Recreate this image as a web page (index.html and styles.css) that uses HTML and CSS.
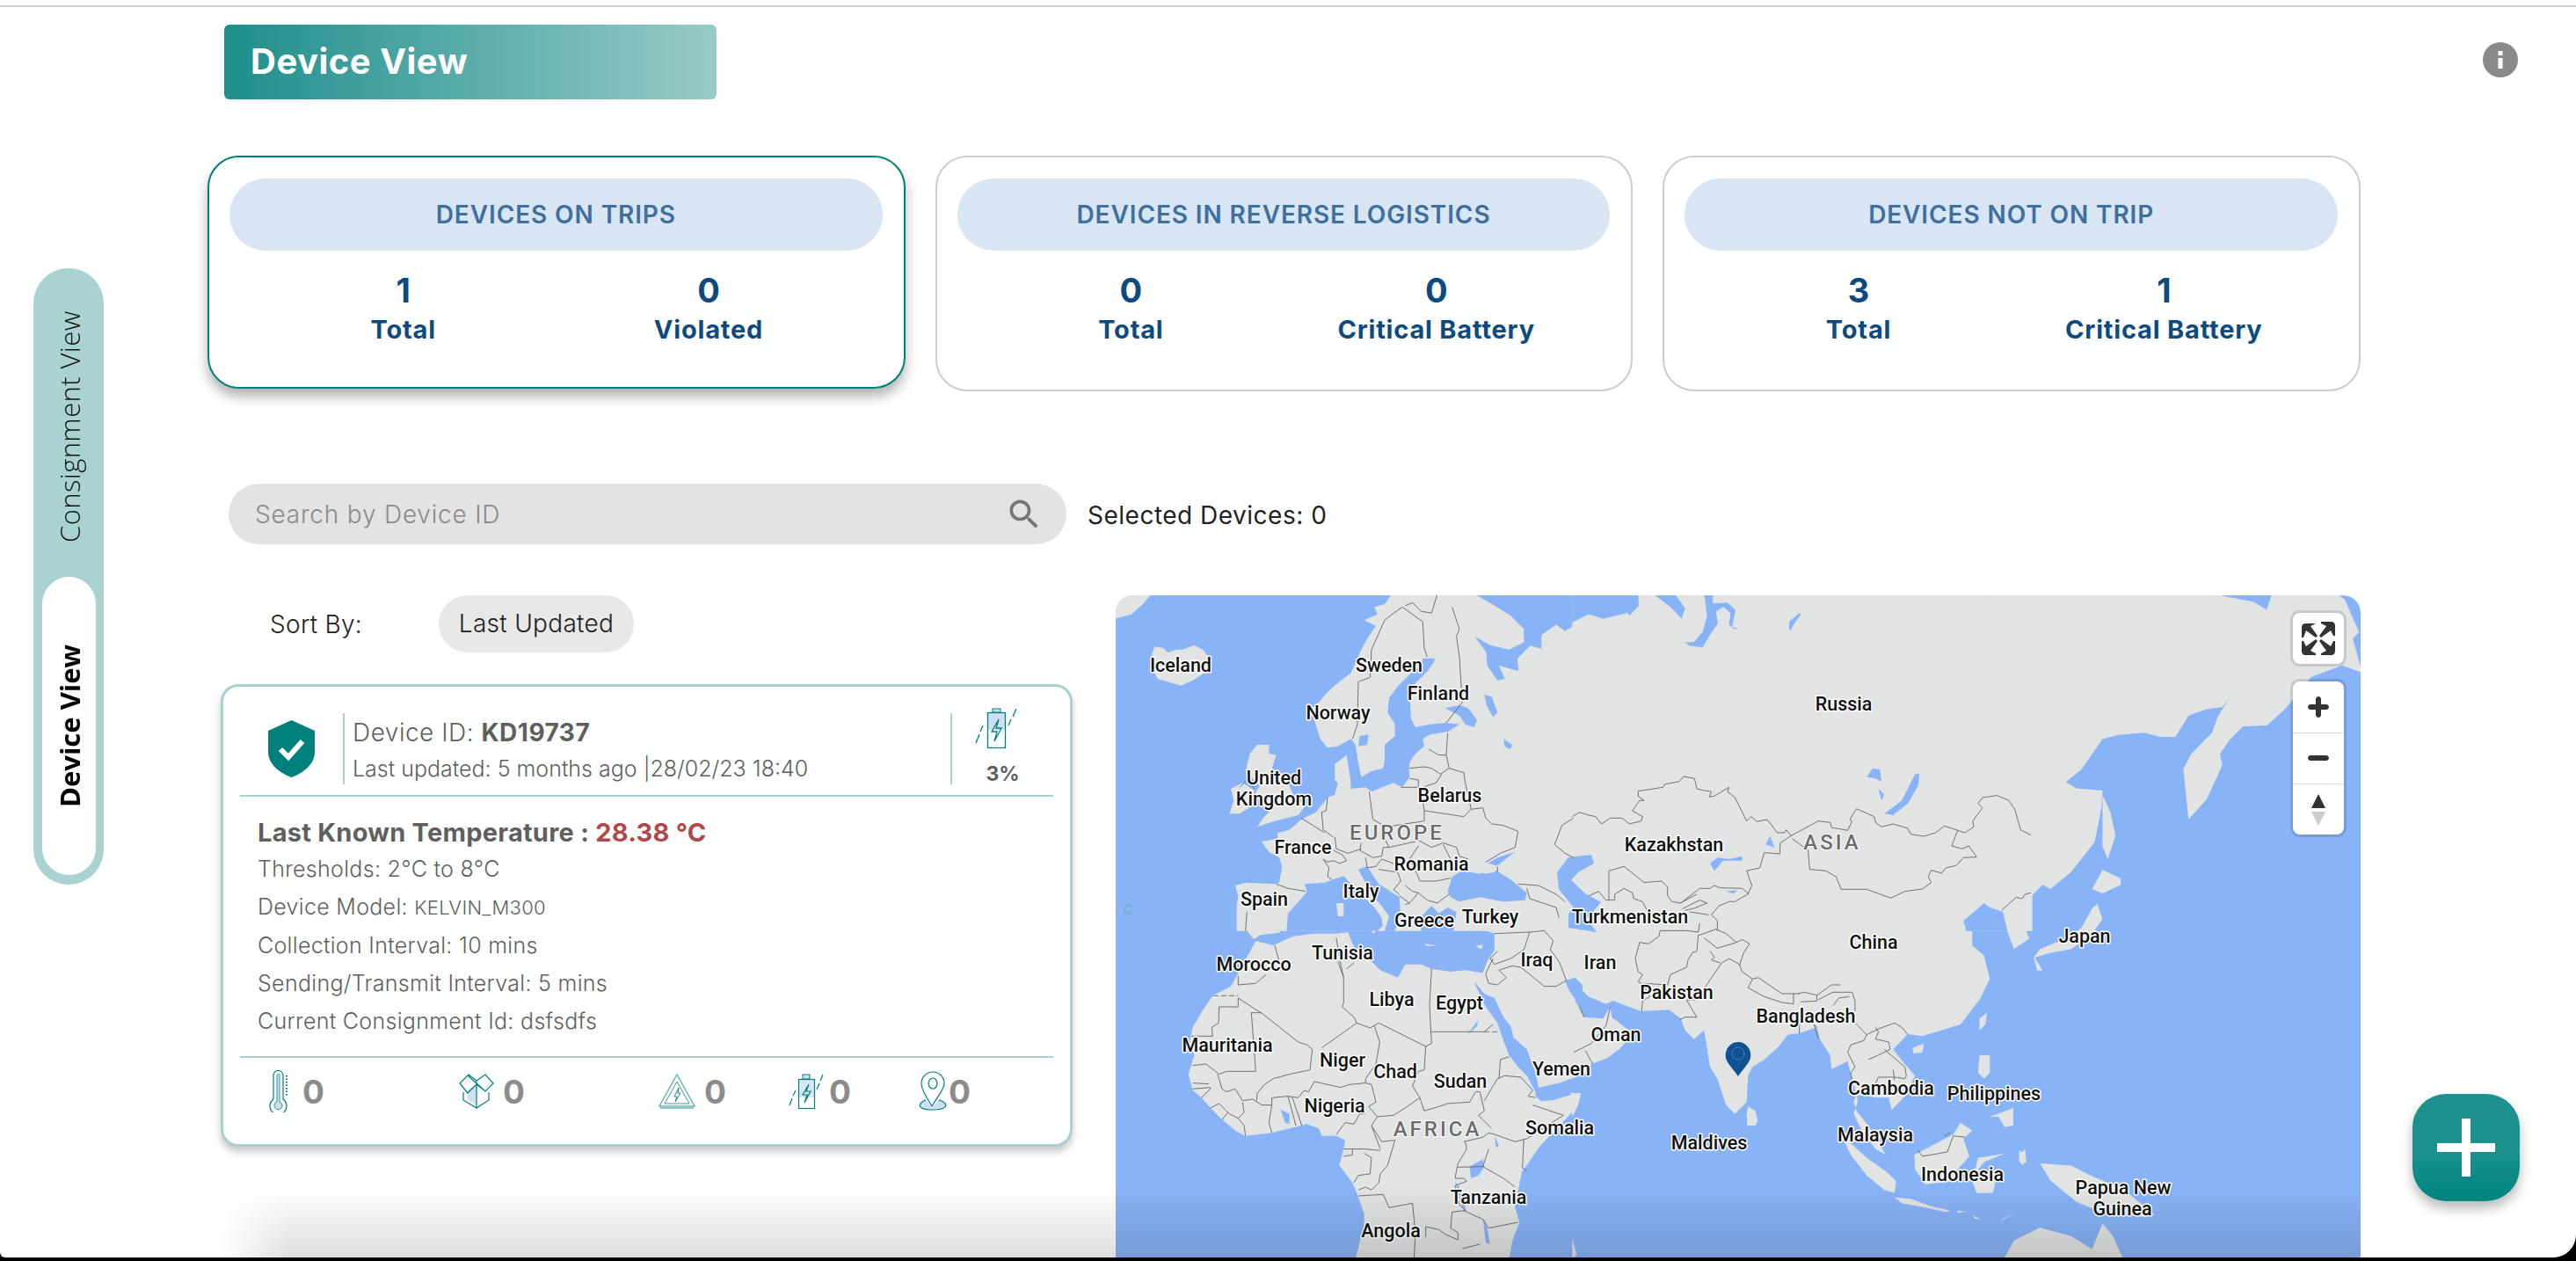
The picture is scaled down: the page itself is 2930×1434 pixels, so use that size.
FILE: index.html
```html
<!DOCTYPE html>
<html lang="en">
<head>
<meta charset="UTF-8">
<title>Device View</title>
<link rel="stylesheet" href="styles.css">
</head>
<body>
<div class="window">
  <div class="topline"></div>

  <svg class="info" width="40" height="40" viewBox="0 0 40 40">
    <circle cx="20" cy="20" r="20" fill="#8a8a8a"/>
    <rect x="17.500" y="10" width="5" height="5" fill="#fff"/>
    <rect x="17.500" y="18" width="5" height="12" fill="#fff"/>
  </svg>

  <div class="layout">
    <div class="tabs">
      <div class="tab">Consignment View</div>
      <div class="tab tab-active">Device View</div>
    </div>

    <div class="main">
      <h1 class="page-title">Device View</h1>

      <div class="summary">
        <div class="summary-card summary-selected">
          <div class="summary-title">DEVICES ON TRIPS</div>
          <div class="summary-stats">
            <div class="stat"><b>1</b><span>Total</span></div>
            <div class="stat"><b>0</b><span>Violated</span></div>
          </div>
        </div>
        <div class="summary-card">
          <div class="summary-title">DEVICES IN REVERSE LOGISTICS</div>
          <div class="summary-stats">
            <div class="stat"><b>0</b><span>Total</span></div>
            <div class="stat"><b>0</b><span>Critical Battery</span></div>
          </div>
        </div>
        <div class="summary-card">
          <div class="summary-title">DEVICES NOT ON TRIP</div>
          <div class="summary-stats">
            <div class="stat"><b>3</b><span>Total</span></div>
            <div class="stat"><b>1</b><span>Critical Battery</span></div>
          </div>
        </div>
      </div>

      <div class="search-row">
        <div class="search">
          <span>Search by Device ID</span>
          <svg width="44" height="44" viewBox="0 0 24 24"><path fill="#757575" d="M15.500 14h-.79l-.28-.27C15.410 12.590 16 11.110 16 9.500 16 5.910 13.090 3 9.500 3S3 5.910 3 9.500 5.910 16 9.500 16c1.610 0 3.090-.59 4.230-1.570l.27.280v.79l5 4.990L20.490 19l-4.990-5zm-6 0C7.010 14 5 11.990 5 9.500S7.010 5 9.500 5 14 7.010 14 9.500 11.990 14 9.500 14z"/></svg>
        </div>
        <div class="selected-count">Selected Devices: 0</div>
      </div>

      <div class="content">
        <div class="device-col">
          <div class="sort-row">
            <span class="sort-label">Sort By:</span>
            <span class="sort-pill">Last Updated</span>
          </div>

          <div class="device-card">
            <div class="device-head">
              <div class="device-status">
                <svg width="53" height="65" viewBox="0 0 53 65">
                  <path fill="#00807c" d="M26.500 0 53 12V36C53 50 40 60 26.500 65 13 60 0 50 0 36V12Z"/>
                  <path fill="none" stroke="#fff" stroke-width="6" d="M14 33 23 42 39 24"/>
                </svg>
              </div>
              <div class="device-info">
                <div class="device-id">Device ID: <b>KD19737</b></div>
                <div class="device-updated">Last updated: 5 months ago |28/02/23 18:40</div>
              </div>
              <div class="device-battery">
                <svg width="49" height="46" viewBox="0 0 49 46">
                  <rect x="14" y="5" width="21" height="20" fill="#cfdff2"/>
                  <rect x="20" y="1" width="9" height="4" fill="#cfdff2" stroke="#00807c"/>
                  <rect x="14.500" y="5.500" width="20" height="40" fill="none" stroke="#00807c" stroke-width="1.300"/>
                  <path fill="none" stroke="#00807c" stroke-width="1.300" d="M27 13 19 27H25L22 38 30 23H24ZM1 40 5 30M6 27 9 20M38 20 41 13M43 10 47 1"/>
                </svg>
                <span>3%</span>
              </div>
            </div>

            <div class="device-body">
              <div class="temp-line">Last Known Temperature : <span class="temp-value">28.38 °C</span></div>
              <div>Thresholds: 2°C to 8°C</div>
              <div>Device Model: <span class="model-code">KELVIN_M300</span></div>
              <div>Collection Interval: 10 mins</div>
              <div>Sending/Transmit Interval: 5 mins</div>
              <div>Current Consignment Id: dsfsdfs</div>
            </div>

            <div class="device-foot">
              <div class="foot-item">
                <svg width="40" height="48" viewBox="0 0 40 48">
                  <path fill="none" stroke="#00807c" stroke-width="1.200" d="M7 33V6A5.500 5.500 0 0 1 18 6V33A9.500 9.500 0 1 1 7 33Z"/>
                  <path fill="#cfdff2" stroke="#00807c" stroke-width=".8" d="M11 36V6A1.500 1.500 0 0 1 14 6V36A4.500 4.500 0 1 1 11 36Z"/>
                  <path stroke="#00807c" stroke-dasharray="1.500 2" stroke-width="2" d="M22 6V30"/>
                </svg>
                <span>0</span>
              </div>
              <div class="foot-item">
                <svg width="50" height="40" viewBox="0 0 50 40">
                  <path fill="#cfdff2" d="M20 12 10 18V30L20 36Z"/>
                  <path fill="none" stroke="#00807c" stroke-width="1.200" d="M5 21V30L20 39 34 30V21M20 39V24M1 11 11 1 20 8 30 1 39 11 30 20 20 12 10 22 1 11M20 8V24M10 2 30 20"/>
                </svg>
                <span>0</span>
              </div>
              <div class="foot-item">
                <svg width="52" height="40" viewBox="0 0 52 40">
                  <path fill="none" stroke="#6ab6b3" stroke-width="1.500" d="M21 1 1 37H41ZM2 39H40"/>
                  <path fill="none" stroke="#00807c" stroke-width=".8" d="M21 9 7 34H35Z"/>
                  <path fill="none" stroke="#00807c" stroke-width=".9" d="M23 16 18 26H21L19 32 25 22H22Z"/>
                </svg>
                <span>0</span>
              </div>
              <div class="foot-item">
                <svg width="46" height="40" viewBox="0 0 46 40">
                  <rect x="11" y="7" width="19" height="20" fill="#cfdff2" opacity=".8"/>
                  <rect x="16" y="1" width="8" height="5" fill="#cfdff2" stroke="#00807c"/>
                  <rect x="11.500" y="6.500" width="18" height="33" fill="none" stroke="#00807c" stroke-width="1.200"/>
                  <path fill="none" stroke="#00807c" stroke-width="1.200" d="M23 12 16 24H21L18 33 25 20H20ZM1 36 4 28M5 25 8 19M32 18 35 11M36 8 39 1"/>
                </svg>
                <span>0</span>
              </div>
              <div class="foot-item">
                <svg class="foot-pin" width="34" height="44" viewBox="0 0 34 44">
                  <path fill="#cfdff2" d="M7 30C-2 36 1 42 14 42 31 42 36 36 24 30L15 41Z"/>
                  <path fill="none" stroke="#00807c" stroke-width="1.200" d="M15 39C8 27 3 20 3 13A12 12 0 0 1 29 13C29 20 22 27 15 39ZM8 32C-4 37 1 43 15 43 31 43 37 37 23 32"/>
                  <ellipse cx="16" cy="13" rx="5" ry="6" fill="none" stroke="#00807c" stroke-width="1.200"/>
                </svg>
                <span>0</span>
              </div>
            </div>
          </div>
        </div>

        <div class="map">
          <svg class="map-art" width="1416" height="753" viewBox="1269 677 1416 753">
            <!-- each group keeps the coordinates of the crop it was traced in -->
            <g class="land">
              <g transform="translate(1270 677) scale(.3333)">
                <path d="M-5 80 50 65 90 30 120-5H-5Z"/>
                <path d="M115 215 130 175 160 180 175 195 205 185 225 185 265 170 295 185 310 205 320 240 300 265 260 290 220 308 175 295 140 285 125 255Z"/>
                <path d="M480 510 520 510 520 540 545 545 530 590 570 620 590 650 610 700 650 710 620 750 540 770 480 790 500 760 530 730 490 715 475 670 490 650 460 620 440 600 455 540Z"/>
                <path d="M390 660 430 640 470 665 460 720 420 745 385 745 400 700Z"/>
                <path d="M940-5H1220L1290 35 1345 70 1390 115 1390 160 1340 185 1275 170 1222 140 1262 195 1265 240 1300 290 1325 285 1305 240 1372 258 1368 215 1412 172 1450 182 1450 135 1500 100 1530 122 1565 100V1145H410V1060L415 1025 405 990 440 980 540 985 555 980 565 925 555 895 520 875 495 840 550 830 550 810 590 800 630 765 680 740 720 690 745 680 755 640 745 630 745 575 785 545 798 625 800 660 850 655 870 670 945 640 975 655 1000 620 998 600 1000 570 1020 540 1050 515 1045 490 1070 475 1130 465 1170 440 1125 435 1070 440 1020 450 1005 420 1000 340 1020 300 1060 260 1085 225 1085 215 1045 215 1040 240 1000 270 960 310 930 350 925 400 950 440 950 480 915 510 915 560 910 590 870 600 835 620 825 570 815 510 800 490 755 515 720 520 695 490 680 440 660 390 690 365 720 330 760 295 800 265 815 230 835 185 860 140 885 105 845 85 890 65 880 40 915 30Z"/>
              </g>
              <g transform="translate(1270 1050) scale(.3333)">
                <path d="M410-5 445 25 468 55 490 40 555 32 580 5 590-5Z"/>
                <path d="M835 5 870 10 905-5 880 35Z"/>
                <path d="M1030-5 1060-5 1040 25Z"/>
                <path d="M1050 70 1095 75 1060 78Z"/>
                <path d="M1225 78 1250 72 1245 88Z"/>
                <path d="M1150-5 1190 8 1250 20 1290 35 1295-5Z"/>
                <path d="M1290 35 1295-5H1565V525L1510 545 1440 560 1430 510 1400 430 1355 390 1345 350 1320 320 1290 255 1255 240 1222 200 1245 180 1265 130 1290 90Z"/>
                <path d="M475 60 535 75 600 45 670 35 750 35 790 30 805 70 830 110 870 130 900 160 960 185 985 140 1040 140 1075 155 1140 165 1190 160 1255 170 1222 205 1260 285 1300 340 1320 400 1340 450 1370 490 1400 520 1430 575 1430 590 1450 607 1490 603 1575 578 1557 642 1446 759 1383 849 1359 966 1375 1020 1350 1085 1340 1145H815L845 1030 845 990 820 920 805 885 760 825 775 770 780 740 750 725 700 725 690 700 650 685 590 700 530 715 440 725 410 710 360 670 330 640 290 595 260 570 245 515 265 450 250 400 260 355 295 295 330 245 390 215 410 180Z"/>
              </g>
              <g transform="translate(1790 677) scale(.3333)">
                <path d="M-5-5H1565V1145H-5Z"/>
              </g>
              <g transform="translate(1790 1050) scale(.3333)">
                <path d="M-5-5H1360V75L1400 110 1420 190 1385 260 1320 345 1190 385 1140 378 1090 430 1130 480 1165 520 1130 590 1085 637 1075 595 1035 595 965 585 955 610 965 640 1005 690 1065 790 1030 770 985 710 955 650 970 605 950 530 935 470 880 497 875 450 840 395 830 355 770 375 730 380 700 420 650 465 610 490 595 520 590 610 550 650 520 620 490 530 465 490 445 365 410 395 380 365 365 325 325 295 230 300 135 265 110 275 50 250 10 210-5 190Z"/>
                <path d="M-5 250 20 290 35 320 100 325 125 285 130 320 205 378 155 430 115 460 60 480 45 510-5 520Z"/>
                <path d="M-10 578 25 580 15 620-5 660Z"/>
                <path d="M-5 1075 10 1130-5 1145Z"/>
                <path d="M595 625 620 640 628 675 620 690 592 690 590 650Z"/>
                <path d="M905 700 935 740 1000 800 1070 850 1100 880 1095 920 1060 910 1000 860 945 790Z"/>
                <path d="M1095 935 1150 940 1220 965 1285 980 1270 985 1200 970 1120 955Z"/>
                <path d="M1162 790 1210 765 1295 720 1320 680 1360 707 1330 735 1350 795 1310 840 1300 880 1200 890 1165 840Z"/>
                <path d="M1380 800 1470 785 1400 815 1380 840 1440 880 1430 920 1375 920 1360 880Z"/>
                <path d="M1385 450 1420 450 1420 510 1400 530 1380 510Z"/>
                <path d="M1420 660 1500 630 1500 690 1470 695 1450 660Z"/>
                <path d="M1310 980 1340 985 1310 988ZM1360 995 1390 1010 1370 1008ZM1450 1020 1510 985 1470 1005ZM1520 790 1540 770 1545 815 1525 820Z"/>
                <path d="M1465 1145 1510 1090 1565 1120V1145Z"/>
                <path d="M1155 425 1195 410 1190 440 1160 445Z"/>
                <path d="M1385 325 1410 305 1405 345 1385 365Z"/>
              </g>
              <g transform="translate(2000 670) scale(.5931 .4873)">
                <path d="M440 10H870L900 18 950 30 975 48 985 10H1110L1125 25 1152 100 1140 115 1158 195 1120 178 1060 205 1010 280 975 318 930 320 905 350 885 385 890 410 860 490 825 537 815 420 830 385 870 335 880 300 905 250 890 275 860 280 825 295 800 345 770 345 740 335 690 340 660 350 620 420 590 450 610 465 660 470 658 510 645 590 600 660 560 700 545 690 500 745 505 775 520 815 490 840 475 790 465 755 440 740Z"/>
                <path d="M660 480 675 520 685 575 670 630 660 600Z"/>
                <path d="M660 655 695 675 695 690 660 710 640 700Z"/>
                <path d="M650 735 660 770 640 805 600 840 555 850 530 860 545 890 535 890 528 860 540 840 590 815 620 790 640 745Z"/>
                <path d="M540 1340 600 1345 640 1370 700 1400 760 1460 740 1465 660 1455 610 1430 560 1380Z"/>
                <path d="M500 1310 512 1320 508 1345 500 1335Z"/>
                <path d="M470 1565 490 1520 540 1490 600 1510 640 1540 660 1480 680 1510 700 1565Z"/>
              </g>
            </g>

            <g class="water">
              <g transform="translate(1270 677) scale(.3333)">
                <path d="M580 1145 585 1085 650 1012 642 985 710 980 738 970 775 958 800 985 840 1025 880 1065 905 1100 908 1128 890 1145Z"/>
                <path d="M825 935 855 925 895 985 965 1030 968 1075 950 1145 915 1145 930 1095 905 1060 870 1020Z"/>
                <path d="M1040 1095 1075 1060 1100 1085 1130 1065 1160 1080 1150 1145H1040Z"/>
                <path d="M1130 1010 1145 960 1180 940 1240 950 1290 935 1345 970 1400 1015 1395 1040 1320 1045 1240 1030 1170 1045 1140 1030Z"/>
                <path d="M1265 915 1300 895 1360 875 1340 890 1310 915 1290 925Z"/>
                <path d="M1120 385 1170 375 1200 385 1230 425 1220 450 1190 440 1170 410Z"/>
                <path d="M1255 340 1280 345 1300 400 1285 415 1265 380Z"/>
                <path d="M1320 490 1350 510 1345 525 1325 515Z"/>
                <path d="M830 480 860 475 855 510 825 515Z"/>
                <path d="M945 530 958 535 945 565Z"/>
              </g>
              <g transform="translate(1270 1050) scale(.3333)">
                <path d="M1530 195 1565 185 1590 210 1590 280 1570 265 1545 230Z"/>
                <path d="M560 635 590 650 590 685 575 680 565 650Z"/>
                <path d="M1205 830 1250 805 1255 830 1235 860 1210 870Z"/>
                <path d="M1155 880 1170 900 1195 985 1180 970Z"/>
                <path d="M1250 1005 1265 1040 1275 1095 1260 1090Z"/>
                <path d="M1200 375 1235 330 1230 350 1205 375Z"/>
                <path d="M1290 725 1305 760 1295 765Z"/>
              </g>
              <g transform="translate(1790 677) scale(.3333)">
                <path d="M-5-5H220L222 35 190 70 185 60 100 80 70 70 50 65-5 92Z"/>
                <path d="M270-5H345L380 45 368 80 330 40Z"/>
                <path d="M445-5H475V28L525 25 552 50 540 108 565 115 545 115 530 100 535 60 510 40 485 55 492 95 465 135 440 178 395 172 380 160 410 160 440 125 455 70Z"/>
                <path d="M735 115 735 90 770 60 775 65 750 100 740 120Z"/>
                <path d="M1000 620 1020 590 1045 595 1050 635 1030 625Z"/>
                <path d="M1040 660 1060 680 1050 700Z"/>
                <path d="M1060 745 1120 700 1165 610 1180 610 1175 650 1140 710 1090 750Z"/>
                <path d="M465 915 490 895 530 900 575 890 575 905 510 905 480 940Z"/>
                <path d="M655 850 670 820 685 860Z"/>
                <path d="M520 1010 560 1005 545 1018Z"/>
                <path d="M-57 945-18 894 60 885 69 915 15 945-9 972 39 1017 93 1047 45 1104 78 1149-18 1134-18 1089-3 1062-51 1002Z"/>
                <path d="M1330 1110 1360 1085 1400 1050 1420 1065 1465 1080 1480 1145H1340Z"/>
              </g>
            </g>

            <g class="land">
              <g transform="translate(1270 677) scale(.3333)">
                <path d="M750 1050 775 1050 775 1095 755 1095Z"/>
                <path d="M770 1000 785 1000 780 1035 772 1030Z"/>
                <path d="M1235 930 1265 912 1300 925 1290 945 1255 950Z"/>
              </g>
            </g>

            <g class="border">
              <path transform="translate(1270 677) scale(.3333)" d="M975 40 940 65 915 85 870 185 865 280 825 295 822 440 805 490M975 40 1045 90 1050 180 1060 210M985 35 1010 25 1040 55 1075 60 1095-5M1145 40 1170 115 1160 140 1170 210 1175 290 1180 365 1125 435M1130 470 1125 545 1135 590M1065 525 1100 545 1125 545M1000 590 1050 585 1075 590 1105 610 1135 590M1135 590 1185 605 1190 640 1210 730 1185 755 1050 735 1045 700 1030 660 1090 640 1110 610M970 655 1030 655 1030 630 1000 625M862 670 875 765M720 690 715 735 700 740 705 800 740 825M630 760 710 810M875 765 920 790 1050 770 1050 735M1210 730 1250 725 1260 760 1280 780 1320 785 1370 805 1360 860 1310 880 1260 910M1020 830 1075 860 1115 845 1160 860 1170 890 1200 900M930 860 1020 840M1030 855 1000 900 1025 950 1035 975 1090 975 1140 965M1115 850 1140 900M835 845 830 870 875 895 905 890 910 860 930 860 915 830M745 825 750 865 790 880 835 865M740 870 770 885 785 905 760 915 740 905 720 910 705 900M705 900 725 930 720 960 735 970M850 895 855 930 885 925 905 900 945 915M895 935 960 945 970 975 945 1005 965 1020M985 990 1010 1010 1030 1015 1000 1050 965 1025M1030 1015 1060 1040 1095 1050 1135 1020M985 1055 1000 1050M545 985 585 1000 645 1010M445 1080 440 1145M1370 985 1440 990 1500 1020 1530 1045M1400 1000 1410 1035 1440 1045 1500 1065 1510 1100M1560 760 1520 785 1495 850 1530 880 1560 895M420 655 445 630 470 660M1300 925V945"/>
              <path transform="translate(1270 1050) scale(.3333)" d="M415 180 415 210 475 205 510 175M540 75 555 130M350 285 415 285 415 255 500 310 620 405 650 415M350 285 348 340 325 355 328 385 255 385M460 305 495 305M460 305 475 505 375 505 350 515 305 480 260 485M650 415 668 430 660 500 590 515 535 530 505 550 480 580 478 605M700 425 820 340 865 357 895 340 1055 420M755 130 775 185 775 270 770 285 810 320 820 340M750 50 765 140 775 185M810 135 785 155M1075 155 1068 280 1075 410 1055 420M1075 370 1255 370 1285 345M880 350 898 405 885 480 850 530 850 545M1055 420 1050 500 1030 505 1010 555 1035 595M1035 595 985 630 945 655 890 660 860 625 885 610 870 550 850 545M850 545 795 550 765 560 675 540 655 575 640 570M890 660 870 690 900 770M750 720 780 680 810 685 830 650 850 650M1035 595 1050 640 1100 625 1130 615 1205 610 1225 575 1240 575 1255 640 1235 655 1280 700M1255 605 1300 530 1325 520 1380 525 1420 570 1405 590 1430 595M1420 620 1525 655 1400 735 1360 745 1290 720 1270 715 1250 730 1185 745M1305 530 1310 465 1340 455M1390 735 1385 835 1400 845M870 690 905 745 950 740 925 825 900 855 895 885 870 910 850 900 825 910M775 770 845 770 900 775M775 795 805 790 805 770M845 785 870 800 865 855 825 860 810 885M825 930 910 925 930 970 1010 955 1020 1060 1015 1145M1190 745 1195 770 1165 820 1155 870 1185 870 1195 880 1155 895 1170 960 1190 980 1145 985 1140 1040 1165 1055 1165 1080 1120 1060 1100 1045 1055 1035 1055 1070M1185 980 1250 1010 1270 1040 1370 1020M1270 770 1250 830 1165 832M1250 830 1320 870 1360 900M1180 1110 1240 1095M345 515 360 565 375 575 405 565 430 605 465 600 495 620 530 620 530 595 585 590 620 595 640 570M585 590 612 690M600 595 632 690M530 620 520 680 530 715M430 610 435 645 415 665 435 690 440 725M380 645 360 670M320 630 350 615 375 640 385 650 415 665M290 595 320 565 320 560 260 565M260 545 315 548M1290 35 1410 30 1460 25 1490 60 1480 90 1510 130 1535 195M1410 30 1390 90 1345 120 1290 140 1275 120 1300 95M1350 145 1380 150 1460 215 1500 215 1535 195M1270 205 1300 210 1330 185 1305 160 1350 145M1285 120 1265 160 1260 175 1270 205"/>
              <path class="dashed" transform="translate(1270 1050) scale(.3333)" d="M330 247H415M1255 370H1310"/>
              <path transform="translate(1790 677) scale(.3333)" d="M-5 755 20 740 50 750 75 755 95 780 125 760 165 760 190 780 230 770 235 755 200 735 225 700 240 700 220 685 220 668 305 655 310 645 360 635 375 618 412 625 420 660 440 665 470 670 462 688 480 685 530 655 525 670 550 690 590 770 605 755 625 772 660 765 695 810 720 810 725 800 742 820M742 820 705 845 703 882 650 878 635 930 590 940 608 990 595 1018M742 820 835 770 875 775 880 792 935 802 950 770 942 765 965 728 1025 755 1030 775 1050 790 1090 780 1140 795 1150 815 1195 822 1235 810 1265 787 1310 802 1335 810 1365 790 1362 770 1395 725 1380 710 1395 690 1445 683 1485 700 1505 730 1525 800 1560 818M745 830 800 870 805 935 860 940 895 960 913 1003 1000 1003 1082 1033 1130 1010 1190 1002 1220 980 1210 960 1220 938 1255 948 1270 930 1305 922 1330 895 1375 893 1348 855 1325 865 1290 855 1310 802M1460 1075 1510 1030 1530 1035 1540 1020 1560 1015M52 1025 85 1010 110 1040 140 1040 140 1020 172 1000 200 1015 205 1035 235 1045 250 1075M120 1040 120 940 172 925 240 980 300 975 320 995 320 1025 335 1045 365 1050 430 1000 465 1000 480 990 500 998 575 1000 597 1018 550 1045 530 1045 495 1060 470 1090 490 1110 490 1145M365 1050 400 1030 420 1020M370 1070 430 1040 455 1050 410 1068 380 1075M395 1080 460 1090"/>
              <path transform="translate(1790 1050) scale(.3333)" d="M225 65 210 120 220 165 235 175 220 200 240 210M225 65 255 70 290 45 295 25 385 25 425 30 430 0M240 205 320 210 330 175 385 150 390 125 405 100 420 95 425 40 430 40 485 20 520 35 555 65M235 205 260 250 235 265 232 300M505 135 450 215 420 260 385 262 420 320 380 320 360 330M505 135 530 120 565 140 575 165 610 190 630 185 710 240 770 240M610 190 595 220 650 250 710 270 750 275 750 240M765 240 785 235 830 245 830 265 775 268M830 245 880 210 910 210M835 260 885 235 935 235 950 235 960 265 960 300M885 280 905 255 940 250M830 355 820 345 835 395M770 375 770 320 800 300M465 95 480 115 470 125 500 135M445 50 490 85 540 70 555 65 575 55 600 70 580 100 570 130 565 145M960 340 1000 380 1020 370 1040 360 1095 340 1120 355 1140 380M1030 355 1040 370 1030 395 1075 405 1080 430 1060 440 1050 445 1005 465M1000 380 990 400 945 415 935 440 960 490 945 510 950 530M1060 430 1130 490 1135 520 1130 530 1095 525 1040 525 1025 555M1090 500 1095 535M20 285 35 320M125 285 110 350 60 410 0 440M40 435 65 480M1175 775 1190 795 1275 780 1295 725 1335 730M1265 725 1285 715"/>
            </g>

            <path class="pin" transform="translate(1790 1050) scale(.3333)" d="M561 522C540 490 518 475 518 450A43 45 0 0 1 604 450C604 475 582 490 561 522Z"/>
            <circle class="pin-ring" cx="1977" cy="1198" r="7"/>

            <text class="ocean" x="1283" y="1040">c</text>

            <text class="lbl" x="1343" y="764">Iceland</text>
            <text class="lbl" x="1580" y="764">Sweden</text>
            <text class="lbl" x="1636" y="796">Finland</text>
            <text class="lbl" x="1522" y="818">Norway</text>
            <text class="lbl" x="1449" y="892">United</text>
            <text class="lbl" x="1449" y="916">Kingdom</text>
            <text class="lbl" x="1649" y="912">Belarus</text>
            <text class="lbl" x="1482" y="971">France</text>
            <text class="lbl" x="1628" y="990">Romania</text>
            <text class="lbl" x="1548" y="1021">Italy</text>
            <text class="lbl" x="1438" y="1030">Spain</text>
            <text class="lbl" x="1620" y="1054">Greece</text>
            <text class="lbl" x="1695" y="1050">Turkey</text>
            <text class="lbl" x="1527" y="1091">Tunisia</text>
            <text class="lbl" x="1426" y="1104">Morocco</text>
            <text class="lbl" x="1748" y="1099">Iraq</text>
            <text class="lbl" x="1583" y="1144">Libya</text>
            <text class="lbl" x="1660" y="1148">Egypt</text>
            <text class="lbl" x="1396" y="1196">Mauritania</text>
            <text class="lbl" x="1527" y="1213">Niger</text>
            <text class="lbl" x="1587" y="1226">Chad</text>
            <text class="lbl" x="1661" y="1237">Sudan</text>
            <text class="lbl" x="1518" y="1265">Nigeria</text>
            <text class="lbl" x="1774" y="1290">Somalia</text>
            <text class="lbl" x="1693" y="1369">Tanzania</text>
            <text class="lbl" x="1582" y="1407">Angola</text>
            <text class="lbl" x="2097" y="808">Russia</text>
            <text class="lbl" x="1904" y="968">Kazakhstan</text>
            <text class="lbl" x="1854" y="1050">Turkmenistan</text>
            <text class="lbl" x="1820" y="1102">Iran</text>
            <text class="lbl" x="2131" y="1079">China</text>
            <text class="lbl" x="1907" y="1136">Pakistan</text>
            <text class="lbl" x="1838" y="1184">Oman</text>
            <text class="lbl" x="1776" y="1223">Yemen</text>
            <text class="lbl" x="2054" y="1163">Bangladesh</text>
            <text class="lbl" x="1944" y="1307">Maldives</text>
            <text class="lbl" x="2151" y="1245">Cambodia</text>
            <text class="lbl" x="2268" y="1251">Philippines</text>
            <text class="lbl" x="2133" y="1298">Malaysia</text>
            <text class="lbl" x="2232" y="1343">Indonesia</text>
            <text class="lbl" x="2371" y="1072">Japan</text>
            <text class="lbl" x="2415" y="1358">Papua New</text>
            <text class="lbl" x="2414" y="1382">Guinea</text>

            <text class="continent" x="1589" y="955">EUROPE</text>
            <text class="continent" x="1635" y="1292">AFRICA</text>
            <text class="continent" x="2084" y="966">ASIA</text>
          </svg>

          <div class="map-ctrl map-ctrl-full">
            <button><svg width="58" height="58" viewBox="0 0 29 29"><path fill="#333" d="M24 16v5.500c0 1.750-.75 2.500-2.500 2.500H16v-1l3-1.500-4-5.500 1-1 5.500 4 1.500-3h1zM6 16l1.500 3 5.500-4 1 1-4 5.500 3 1.500v1H7.500C5.750 24 5 23.250 5 21.500V16h1zm7-11v1l-3 1.500 4 5.500-1 1-5.500-4L6 14H5V8.500C5 6.750 5.750 6 7.500 6H13zm11 2.500c0-1.750-.75-2.500-2.500-2.500H16v1l3 1.500-4 5.500 1 1 5.500-4 1.500 3h1V8.500z"/></svg></button>
          </div>
          <div class="map-ctrl map-ctrl-zoom">
            <button><svg width="58" height="58" viewBox="0 0 29 29"><path fill="#333" d="M14.500 8.500c-.75 0-1.500.75-1.500 1.500v3h-3c-.75 0-1.500.75-1.500 1.500S9.250 16 10 16h3v3c0 .75.75 1.500 1.500 1.500S16 19.750 16 19v-3h3c.75 0 1.500-.75 1.500-1.500S19.750 13 19 13h-3v-3c0-.75-.75-1.500-1.500-1.500z"/></svg></button>
            <button><svg width="58" height="58" viewBox="0 0 29 29"><path fill="#333" d="M10 13c-.75 0-1.500.75-1.500 1.500S9.250 16 10 16h9c.75 0 1.500-.75 1.500-1.500S19.750 13 19 13h-9z"/></svg></button>
            <button><svg width="58" height="58" viewBox="0 0 29 29"><path fill="#333" d="M10.500 14l4-8 4 8h-8z"/><path fill="#ccc" d="M10.500 16l4 8 4-8h-8z"/></svg></button>
          </div>
        </div>
      </div>
    </div>
  </div>

  <div class="fade-bottom"></div>

  <button class="fab">
    <svg width="66" height="66" viewBox="0 0 66 66"><path fill="#fff" d="M28 0H38V28H66V38H38V66H28V38H0V28H28Z"/></svg>
  </button>
</div>
</body>
</html>
```
FILE: styles.css
```css
* {
  box-sizing: border-box;
}

html, body {
  margin: 0;
  height: 1434px;
  overflow: hidden;
  background: #000;
}

.window {
  position: relative;
  height: 1430px;
  background: #fff;
  border-radius: 0 0 26px 6px;
  overflow: hidden;
  font-family: Inter, "Open Sans", sans-serif;
  padding-top: 6px;
}

.topline {
  height: 2px;
  background: #cfcfcf;
}

.info {
  position: absolute;
  top: 48px;
  right: 66px;
}

.layout {
  display: flex;
}

/* vertical view switch */
.tabs {
  width: 80px;
  height: 701px;
  margin: 297px 0 0 38px;
  padding: 0 9px 11px 10px;
  background: #aad2d2;
  border-radius: 40px;
  display: flex;
  flex-direction: column;
  flex-shrink: 0;
  font-family: "Open Sans", sans-serif;
}

.tab {
  height: 351px;
  padding-bottom: 10px;
  writing-mode: vertical-rl;
  transform: rotate(180deg);
  display: flex;
  align-items: center;
  justify-content: center;
  font-size: 31px;
  font-weight: 300;
  letter-spacing: .4px;
  color: #111;
}

.tab-active {
  height: 339px;
  padding-bottom: 0;
  background: #fff;
  border-radius: 32px;
  font-weight: 700;
  letter-spacing: 0;
  color: #000;
}

.main {
  width: 2449px;
  margin-left: 118px;
}

.page-title {
  width: 560px;
  height: 85px;
  margin: 20px 0 0 19px;
  padding-left: 30px;
  border-radius: 6px;
  background: linear-gradient(90deg, #1f8e8c, #98cbc8);
  color: #fff;
  font-size: 40px;
  font-weight: 700;
  letter-spacing: .5px;
  line-height: 83px;
}

.summary {
  display: flex;
  align-items: flex-start;
  gap: 34px;
  margin-top: 64px;
}

.summary-card {
  flex: 1;
  height: 268px;
  padding: 24px 24px 0 23px;
  border: 2px solid #cdcdcd;
  border-radius: 36px;
  background: #fff;
}

.summary-selected {
  height: 265px;
  border-color: #00807c;
  box-shadow: 0 9px 14px rgba(0, 0, 0, .3);
}

.summary-title {
  height: 82px;
  border-radius: 41px;
  background: #d8e6f4;
  color: #3f6f9f;
  font-size: 28px;
  font-weight: 600;
  letter-spacing: .9px;
  line-height: 82px;
  text-align: center;
}

.summary-stats {
  display: flex;
  padding: 0 24px;
}

.stat {
  flex: 1;
  color: #0d4a80;
  text-align: center;
}

.stat b {
  display: block;
  margin-top: 22px;
  font-size: 38px;
  font-weight: 700;
  line-height: 46px;
}

.stat span {
  display: block;
  margin-top: 2px;
  font-size: 29px;
  font-weight: 700;
  letter-spacing: .8px;
  line-height: 40px;
}

.search-row {
  display: flex;
  align-items: center;
  gap: 24px;
  margin: 105px 0 0 24px;
}

.search {
  width: 953px;
  height: 69px;
  padding: 0 26px 0 30px;
  border-radius: 35px;
  background: #e3e3e3;
  color: #8a8a8a;
  font-size: 28px;
  font-weight: 300;
  letter-spacing: .8px;
  display: flex;
  align-items: center;
  justify-content: space-between;
}

.selected-count {
  padding-top: 3px;
  font-size: 28px;
  font-weight: 400;
  letter-spacing: .5px;
  color: #222;
}

.content {
  display: flex;
  gap: 49px;
  margin: 58px 0 0 15px;
}

.device-col {
  width: 969px;
  flex-shrink: 0;
}

.sort-row {
  display: flex;
  align-items: center;
  height: 65px;
  margin-bottom: 36px;
  padding-left: 56px;
  font-size: 28px;
  font-weight: 300;
  letter-spacing: .3px;
  color: #222;
}

.sort-label {
  width: 192px;
}

.sort-pill {
  width: 222px;
  line-height: 65px;
  border-radius: 33px;
  background: #e8e8e8;
  text-align: center;
}

.device-card {
  height: 526px;
  padding: 0 19px;
  border: 3px solid #a8d0d0;
  border-radius: 20px;
  background: #fff;
  box-shadow: 0 6px 8px rgba(0, 0, 0, .22);
  color: #5f5f5f;
}

.device-head {
  display: flex;
  height: 125px;
  padding-top: 30px;
  border-bottom: 2px solid #a8d0d0;
}

.device-status {
  width: 117px;
  height: 81px;
  display: flex;
  align-items: center;
  justify-content: center;
}

.device-info {
  flex: 1;
  height: 81px;
  padding-left: 9px;
  border-left: 2px solid #a8d0d0;
  font-weight: 300;
}

.device-id {
  font-size: 28px;
  letter-spacing: .5px;
  line-height: 44px;
}

.device-id b {
  font-weight: 700;
}

.device-updated {
  font-size: 25px;
  line-height: 38px;
}

.device-battery {
  width: 117px;
  height: 81px;
  border-left: 2px solid #a8d0d0;
  position: relative;
  text-align: center;
}

.device-battery svg {
  position: absolute;
  top: -6px;
  left: 26px;
}

.device-battery span {
  position: absolute;
  left: 0;
  right: 0;
  top: 55px;
  font-size: 23px;
  font-weight: 700;
}

.device-body {
  padding: 20px 0 18px 20px;
  font-size: 25px;
  font-weight: 300;
  letter-spacing: .3px;
  line-height: 43px;
}

.model-code {
  font-size: 22px;
}

.temp-line {
  font-size: 29px;
  font-weight: 700;
  letter-spacing: .25px;
  line-height: 41px;
}

.temp-value {
  color: #b04a4a;
}

.device-foot {
  display: grid;
  grid-template-columns: 218px 227px 148px 148px 1fr;
  align-items: center;
  height: 78px;
  padding-left: 31px;
  border-top: 2px solid #a8d0d0;
}

.foot-item {
  display: flex;
  align-items: center;
  color: #8c8c8c;
  font-size: 37px;
  font-weight: 700;
}

.foot-pin {
  overflow: visible;
}

.map {
  position: relative;
  width: 1416px;
  height: 753px;
  border-radius: 20px 20px 0 0;
  overflow: hidden;
  background: #88b3f7;
}

.map-art {
  display: block;
}

.land {
  fill: #e1e4e3;
}

.water {
  fill: #88b3f7;
}

.border path {
  fill: none;
  stroke: #707272;
  stroke-width: 1;
  vector-effect: non-scaling-stroke;
}

.border .dashed {
  stroke-dasharray: 6 3;
}

.pin {
  fill: #0f5293;
}

.pin-ring {
  fill: none;
  stroke: #6c93c0;
  stroke-dasharray: 2 1;
}

.lbl, .continent {
  font-family: Roboto, sans-serif;
  text-anchor: middle;
  paint-order: stroke;
  stroke: #fff;
  stroke-linejoin: round;
}

.lbl {
  fill: #111;
  font-size: 21.500px;
  font-weight: 500;
  stroke-width: 3px;
}

.continent {
  fill: #6b6b6b;
  font-size: 24px;
  font-weight: 500;
  letter-spacing: 3px;
  stroke-width: 2px;
}

.ocean {
  fill: #6fb0d0;
  font-family: Roboto, sans-serif;
  font-size: 22px;
  font-style: italic;
  text-anchor: middle;
}

.map-ctrl {
  position: absolute;
  right: 19px;
  width: 58px;
  border-radius: 8px;
  background: #fff;
  box-shadow: 0 0 0 3px rgba(0, 0, 0, .12);
  overflow: hidden;
}

.map-ctrl button {
  display: block;
  width: 58px;
  height: 58px;
  padding: 0;
  border: 0;
  background: none;
}

.map-ctrl button + button {
  border-top: 1px solid #ddd;
}

.map-ctrl svg {
  display: block;
  margin: -1px 0 0;
}

.map-ctrl-full {
  top: 20px;
}

.map-ctrl-zoom {
  top: 98px;
}

.fade-bottom {
  position: absolute;
  left: 250px;
  width: 2435px;
  bottom: 0;
  height: 80px;
  background: linear-gradient(rgba(0, 0, 0, 0), rgba(0, 0, 0, .13));
  -webkit-mask-image: linear-gradient(90deg, transparent, #000 80px);
  mask-image: linear-gradient(90deg, transparent, #000 80px);
}

.fab {
  position: absolute;
  left: 2744px;
  top: 1244px;
  width: 122px;
  height: 122px;
  padding: 28px;
  border: 0;
  border-radius: 38px;
  background: linear-gradient(#1d918d 50%, #008480);
  box-shadow: 0 8px 14px rgba(0, 0, 0, .28);
}

.fab svg {
  display: block;
}
```
